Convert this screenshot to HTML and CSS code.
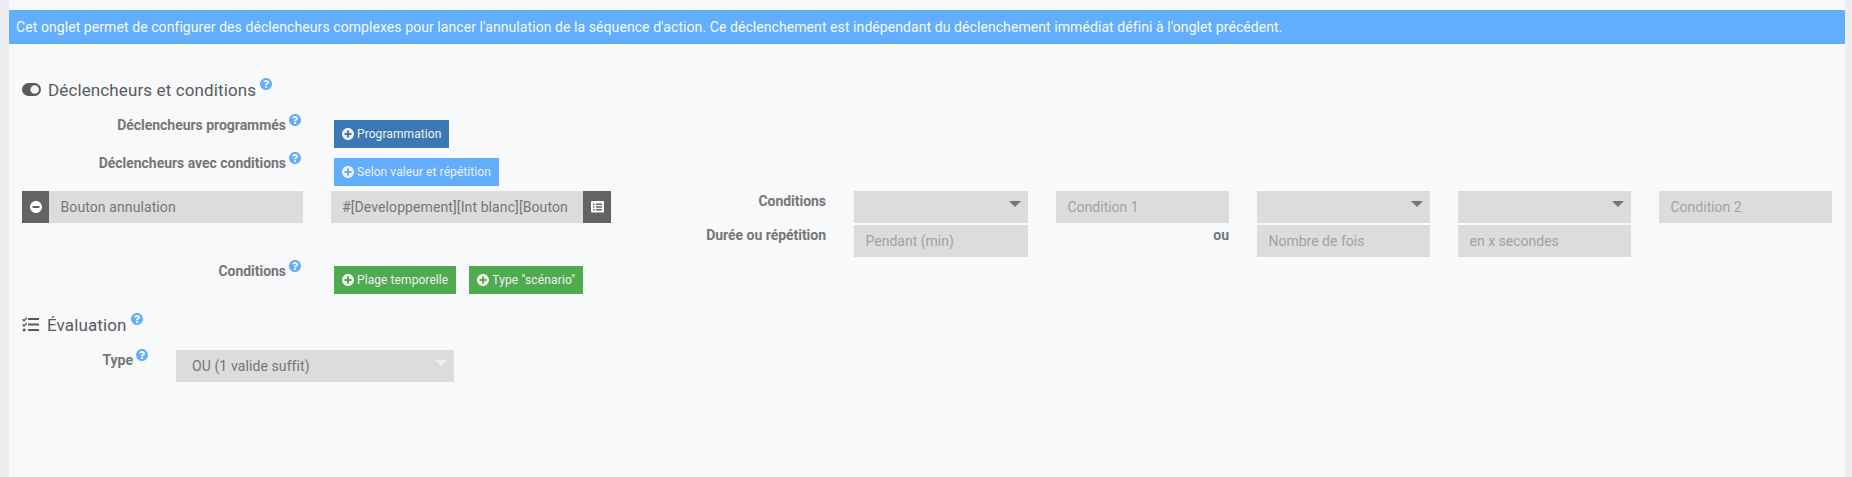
FILE: index.html
```html
<!DOCTYPE html>
<html lang="fr">
<head>
<meta charset="utf-8">
<title>Déclencheurs d'annulation</title>
<link rel="stylesheet" href="styles.css">
</head>
<body>
<svg width="0" height="0" class="defs">
  <symbol id="help" viewBox="8 8 496 496"><path d="M504 256c0 137-111 248-248 248S8 393 8 256 119 8 256 8s248 111 248 248zM262.700 90c-54.500 0-89.300 23-116.500 63.800-3.500 5.300-2.400 12.400 2.700 16.300l34.700 26.300c5.200 3.900 12.600 3 16.700-2.100 17.900-22.700 30.100-35.800 57.300-35.800 20.400 0 45.700 13.100 45.700 33 0 15-12.400 22.700-32.500 34C247.100 238.500 216 254.900 216 296v4c0 6.600 5.400 12 12 12h56c6.600 0 12-5.400 12-12v-1.300c0-28.500 83.200-29.600 83.200-106.700 0-58-60.200-102-116.500-102zM256 338c-25.400 0-46 20.600-46 46s20.600 46 46 46 46-20.600 46-46-20.600-46-46-46z"/></symbol>
  <symbol id="plus" viewBox="8 8 496 496"><path d="M256 8C119 8 8 119 8 256s111 248 248 248 248-111 248-248S393 8 256 8zm144 276c0 6.600-5.400 12-12 12h-92v92c0 6.600-5.400 12-12 12h-56c-6.600 0-12-5.400-12-12v-92h-92c-6.600 0-12-5.400-12-12v-56c0-6.600 5.400-12 12-12h92v-92c0-6.600 5.400-12 12-12h56c6.600 0 12 5.400 12 12v92h92c6.600 0 12 5.400 12 12v56z"/></symbol>
</svg>
<main class="panel">
  <div class="alert">Cet onglet permet de configurer des déclencheurs complexes pour lancer l'annulation de la séquence d'action. Ce déclenchement est indépendant du déclenchement immédiat défini à l'onglet précédent.</div>

  <h2 class="legend">
    <svg class="legend-icon toggle" viewBox="0 0 576 384" preserveAspectRatio="none"><path fill-rule="evenodd" d="M384 0H192a192 192 0 0 0 0 384h192a192 192 0 0 0 0-384zM384 320a128 128 0 1 1 0-256 128 128 0 0 1 0 256z"/></svg>
    <span>Déclencheurs et conditions</span><svg class="help"><use href="#help"/></svg>
  </h2>

  <div class="row programmed">
    <div class="label">Déclencheurs programmés<svg class="help"><use href="#help"/></svg></div>
    <div class="actions"><a class="btn primary"><svg><use href="#plus"/></svg>Programmation</a></div>
  </div>
  <div class="row valued">
    <div class="label">Déclencheurs avec conditions<svg class="help"><use href="#help"/></svg></div>
    <div class="actions"><a class="btn info"><svg><use href="#plus"/></svg>Selon valeur et répétition</a></div>
  </div>

  <div class="trigger">
    <div class="group">
      <a class="addon remove"><svg viewBox="8 8 496 496"><path d="M256 8C119 8 8 119 8 256s111 248 248 248 248-111 248-248S393 8 256 8zM124 296c-6.600 0-12-5.400-12-12v-56c0-6.600 5.400-12 12-12h264c6.600 0 12 5.400 12 12v56c0 6.600-5.400 12-12 12H124z"/></svg></a>
      <div class="field value name">Bouton annulation</div>
    </div>
    <div class="group">
      <div class="field value command">#[Developpement][Int blanc][Bouton</div>
      <a class="addon pick"><svg viewBox="0 0 13 12"><rect width="13" height="11.500" rx="1"/><path class="cut" d="M2 2.500h1.500v1.500H2zM5 2.500h6v1.500H5zM2 5.200h1.500v1.500H2zM5 5.200h6v1.500H5zM2 8h1.500v1.500H2zM5 8h6v1.500H5z"/></svg></a>
    </div>
    <div class="criteria">
      <div class="label">Conditions</div>
      <div class="field select"></div>
      <div class="field">Condition 1</div>
      <div class="field select"></div>
      <div class="field select"></div>
      <div class="field">Condition 2</div>
      <div class="label">Durée ou répétition</div>
      <div class="field">Pendant (min)</div>
      <div class="label">ou</div>
      <div class="field">Nombre de fois</div>
      <div class="field">en x secondes</div>
    </div>
  </div>

  <div class="row conditions">
    <div class="label">Conditions<svg class="help"><use href="#help"/></svg></div>
    <div class="actions"><a class="btn success"><svg><use href="#plus"/></svg>Plage temporelle</a><a class="btn success scenario"><svg><use href="#plus"/></svg>Type "scénario"</a></div>
  </div>

  <h2 class="legend evaluation">
    <svg class="legend-icon tasks" viewBox="0 0 17 15"><path d="M6 1h11v2H6zM6 6.500h11v2H6zM6 12h11v2H6z"/><circle cx="2.200" cy="12.900" r="1.500"/><path class="tick" d="M.5 2.300 2 3.700 4.800.7M.5 7.500 2 8.900 4.800 5.900"/></svg>
    <span>Évaluation</span><svg class="help"><use href="#help"/></svg>
  </h2>
  <div class="row type">
    <div class="label">Type<svg class="help"><use href="#help"/></svg></div>
    <div class="field value select light">OU (1 valide suffit)</div>
  </div>
</main>
</body>
</html>
```
FILE: styles.css
```css
* { box-sizing: border-box; }
body {
  margin: 0;
  padding: 0 7px 0 9px;
  background: #edeef0;
  font: 14px/20px Roboto, "Liberation Sans", sans-serif;
  color: #767676;
}
.defs { display: block; height: 0; }
.panel { height: 477px; padding-top: 10px; background: #f8f9fb; }
svg { fill: currentColor; flex: none; }
.alert {
  height: 34px;
  padding: 7px;
  background: #62aefc;
  color: #f8f9fb;
  letter-spacing: 0.074px;
  white-space: nowrap;
}
.legend {
  display: flex;
  height: 24px;
  margin: 34px 0 0;
  padding-left: 13px;
  font-size: 17px;
  line-height: 24px;
  font-weight: 400;
  letter-spacing: 0.12px;
  color: #5b5b5b;
}
.legend-icon { align-self: center; }
.toggle { width: 19px; height: 13px; margin: 0 7px 1px 0; }
.tasks { width: 17px; height: 15px; margin: 0 8px 1px 0; }
.tick { fill: none; stroke: currentColor; stroke-width: 1.400; }
.help { width: 12px; height: 12px; color: #62aefc; }
.legend .help { margin: 0 0 0 4px; }
.label { font-weight: 700; letter-spacing: -0.03px; white-space: nowrap; }
.row { display: flex; padding-left: 13px; }
.row .label { display: flex; justify-content: flex-end; width: 279px; }
.row .help { margin: -1px 0 0 3px; }
.actions { display: flex; gap: 13px; margin-left: 33px; }
.btn {
  display: flex;
  align-items: center;
  height: 28px;
  padding: 0 8px;
  font-size: 12px;
  letter-spacing: 0.08px;
  color: #f0f0f0;
}
.btn svg { width: 12px; height: 12px; margin: 0 3px 1px 0; }
.primary { background: #3c78b5; }
.info { background: #62aefc; }
.success { background: #50aa50; }
.scenario { letter-spacing: 0.14px; }
.programmed { margin-top: 13px; }
.programmed .actions, .valued .actions { padding-top: 5px; }
.valued { margin-top: 5px; }
.trigger { display: flex; margin-top: 5px; padding: 0 13px; }
.group { display: flex; height: 32px; }
.group + .group { margin-left: 28px; }
.addon {
  display: flex;
  align-items: center;
  justify-content: center;
  height: 32px;
  padding-bottom: 1px;
  background: #636363;
  color: #fff;
}
.addon svg { width: 12px; height: 12px; }
.remove { width: 27px; }
.pick { width: 28px; }
.pick svg { width: 13px; }
.cut { fill: #636363; }
.field {
  height: 32px;
  padding: 0 12px 0 11.500px;
  background: #dcdcdc;
  color: #a2a2a2;
  line-height: 32px;
  white-space: nowrap;
  overflow: hidden;
}
.value { color: #767676; letter-spacing: 0.1px; }
.name { width: 254px; }
.command { width: 252px; padding-left: 11px; }
.select {
  display: flex;
  justify-content: space-between;
}
.select::after {
  content: "";
  margin: 10px -5px 0 auto;
  height: 0;
  border: 6px solid transparent;
  border-top-color: #767676;
  border-bottom: 0;
}
.criteria {
  display: grid;
  grid-template-columns: 187px 174px repeat(4, 173px);
  column-gap: 28px;
  row-gap: 2px;
  margin-left: 28px;
}
.criteria .label { text-align: right; }
.conditions { margin-top: 4px; }
.conditions .actions { padding-top: 5px; }
.evaluation { margin-top: 19px; }
.type { margin-top: 12px; }
.type .label { width: 126px; padding-top: 1px; }
.type .field { width: 278px; margin: 1px 0 0 28px; padding-left: 16px; }
.type .light::after { border-top-color: #f0f0f0; }
```
